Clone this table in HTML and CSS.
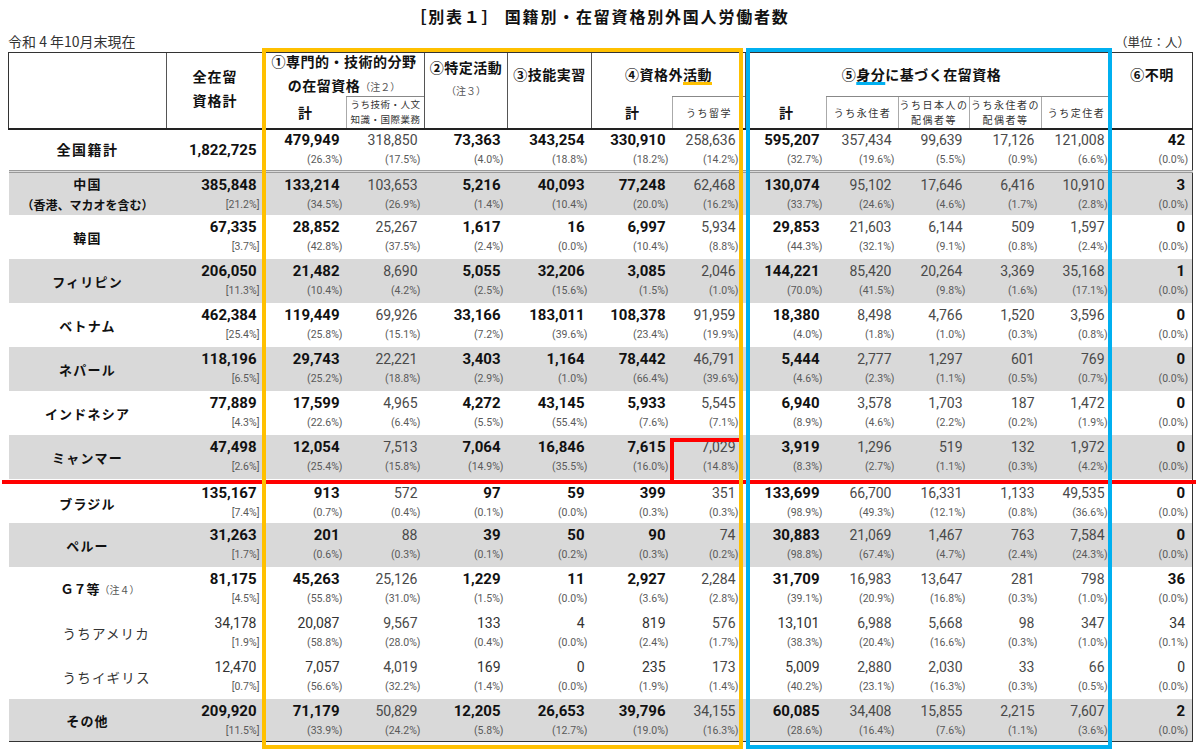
FILE: index.html
```html
<!DOCTYPE html>
<html lang="ja">
<head>
<meta charset="utf-8">
<title>国籍別・在留資格別外国人労働者数</title>
<link rel="stylesheet" href="styles.css">
</head>
<body>
<div class="page">
  <h1 class="title">［別表１］ 国籍別・在留資格別外国人労働者数</h1>
  <div class="meta"><span>令和 4 年10月末現在</span><span class="unit">（単位：人）</span></div>
  <table class="sheet">
    <colgroup>
      <col class="w-name"><col class="w-all"><col class="w-83"><col class="w-78"><col class="w-83"><col class="w-84"><col class="w-81"><col class="w-73"><col class="w-81"><col class="w-72"><col class="w-71"><col class="w-72"><col class="w-70"><col class="w-81">
    </colgroup>
    <thead>
      <tr class="h1">
        <th class="first" rowspan="2"></th>
        <th class="tall" rowspan="2">全在留<br>資格計</th>
        <th class="grp" colspan="2"><div class="lines">①専門的・技術的分野<br>の在留資格<span class="note">（注２）</span></div></th>
        <th class="two" rowspan="2">②特定活動<br><span class="note">（注３）</span></th>
        <th class="top" rowspan="2">③技能実習</th>
        <th class="top" colspan="2">④資格外<span class="u-y">活動</span></th>
        <th class="top shift" colspan="5">⑤<span class="u-b">身分</span>に基づく在留資格</th>
        <th class="top last" rowspan="2">⑥不明</th>
      </tr>
      <tr class="h2">
        <th class="kei">計</th>
        <th class="uchi tiny">うち技術・人文<br>知識・国際業務</th>
        <th class="kei">計</th>
        <th class="uchi">うち留学</th>
        <th class="kei">計</th>
        <th class="uchi">うち永住者</th>
        <th class="uchi">うち日本人の<br>配偶者等</th>
        <th class="uchi">うち永住者の<br>配偶者等</th>
        <th class="uchi">うち定住者</th>
      </tr>
    </thead>
    <tbody>
      <tr class="tot">
        <th class="big">全国籍計</th>
        <td class="m mid"><span class="n">1,822,725</span></td>
        <td class="m"><span class="n">479,949</span><span class="p">(26.3%)</span></td>
        <td><span class="n">318,850</span><span class="p">(17.5%)</span></td>
        <td class="m"><span class="n">73,363</span><span class="p">(4.0%)</span></td>
        <td class="m"><span class="n">343,254</span><span class="p">(18.8%)</span></td>
        <td class="m"><span class="n">330,910</span><span class="p">(18.2%)</span></td>
        <td><span class="n">258,636</span><span class="p">(14.2%)</span></td>
        <td class="m"><span class="n">595,207</span><span class="p">(32.7%)</span></td>
        <td><span class="n">357,434</span><span class="p">(19.6%)</span></td>
        <td><span class="n">99,639</span><span class="p">(5.5%)</span></td>
        <td><span class="n">17,126</span><span class="p">(0.9%)</span></td>
        <td><span class="n">121,008</span><span class="p">(6.6%)</span></td>
        <td class="m"><span class="n">42</span><span class="p">(0.0%)</span></td>
      </tr>
      <tr class="g">
        <th>中国<br><span class="hk">（香港、マカオを含む）</span></th>
        <td class="m"><span class="n">385,848</span><span class="p">[21.2%]</span></td>
        <td class="m"><span class="n">133,214</span><span class="p">(34.5%)</span></td>
        <td><span class="n">103,653</span><span class="p">(26.9%)</span></td>
        <td class="m"><span class="n">5,216</span><span class="p">(1.4%)</span></td>
        <td class="m"><span class="n">40,093</span><span class="p">(10.4%)</span></td>
        <td class="m"><span class="n">77,248</span><span class="p">(20.0%)</span></td>
        <td><span class="n">62,468</span><span class="p">(16.2%)</span></td>
        <td class="m"><span class="n">130,074</span><span class="p">(33.7%)</span></td>
        <td><span class="n">95,102</span><span class="p">(24.6%)</span></td>
        <td><span class="n">17,646</span><span class="p">(4.6%)</span></td>
        <td><span class="n">6,416</span><span class="p">(1.7%)</span></td>
        <td><span class="n">10,910</span><span class="p">(2.8%)</span></td>
        <td class="m"><span class="n">3</span><span class="p">(0.0%)</span></td>
      </tr>
      <tr>
        <th>韓国</th>
        <td class="m"><span class="n">67,335</span><span class="p">[3.7%]</span></td>
        <td class="m"><span class="n">28,852</span><span class="p">(42.8%)</span></td>
        <td><span class="n">25,267</span><span class="p">(37.5%)</span></td>
        <td class="m"><span class="n">1,617</span><span class="p">(2.4%)</span></td>
        <td class="m"><span class="n">16</span><span class="p">(0.0%)</span></td>
        <td class="m"><span class="n">6,997</span><span class="p">(10.4%)</span></td>
        <td><span class="n">5,934</span><span class="p">(8.8%)</span></td>
        <td class="m"><span class="n">29,853</span><span class="p">(44.3%)</span></td>
        <td><span class="n">21,603</span><span class="p">(32.1%)</span></td>
        <td><span class="n">6,144</span><span class="p">(9.1%)</span></td>
        <td><span class="n">509</span><span class="p">(0.8%)</span></td>
        <td><span class="n">1,597</span><span class="p">(2.4%)</span></td>
        <td class="m"><span class="n">0</span><span class="p">(0.0%)</span></td>
      </tr>
      <tr class="g">
        <th>フィリピン</th>
        <td class="m"><span class="n">206,050</span><span class="p">[11.3%]</span></td>
        <td class="m"><span class="n">21,482</span><span class="p">(10.4%)</span></td>
        <td><span class="n">8,690</span><span class="p">(4.2%)</span></td>
        <td class="m"><span class="n">5,055</span><span class="p">(2.5%)</span></td>
        <td class="m"><span class="n">32,206</span><span class="p">(15.6%)</span></td>
        <td class="m"><span class="n">3,085</span><span class="p">(1.5%)</span></td>
        <td><span class="n">2,046</span><span class="p">(1.0%)</span></td>
        <td class="m"><span class="n">144,221</span><span class="p">(70.0%)</span></td>
        <td><span class="n">85,420</span><span class="p">(41.5%)</span></td>
        <td><span class="n">20,264</span><span class="p">(9.8%)</span></td>
        <td><span class="n">3,369</span><span class="p">(1.6%)</span></td>
        <td><span class="n">35,168</span><span class="p">(17.1%)</span></td>
        <td class="m"><span class="n">1</span><span class="p">(0.0%)</span></td>
      </tr>
      <tr>
        <th>ベトナム</th>
        <td class="m"><span class="n">462,384</span><span class="p">[25.4%]</span></td>
        <td class="m"><span class="n">119,449</span><span class="p">(25.8%)</span></td>
        <td><span class="n">69,926</span><span class="p">(15.1%)</span></td>
        <td class="m"><span class="n">33,166</span><span class="p">(7.2%)</span></td>
        <td class="m"><span class="n">183,011</span><span class="p">(39.6%)</span></td>
        <td class="m"><span class="n">108,378</span><span class="p">(23.4%)</span></td>
        <td><span class="n">91,959</span><span class="p">(19.9%)</span></td>
        <td class="m"><span class="n">18,380</span><span class="p">(4.0%)</span></td>
        <td><span class="n">8,498</span><span class="p">(1.8%)</span></td>
        <td><span class="n">4,766</span><span class="p">(1.0%)</span></td>
        <td><span class="n">1,520</span><span class="p">(0.3%)</span></td>
        <td><span class="n">3,596</span><span class="p">(0.8%)</span></td>
        <td class="m"><span class="n">0</span><span class="p">(0.0%)</span></td>
      </tr>
      <tr class="g">
        <th>ネパール</th>
        <td class="m"><span class="n">118,196</span><span class="p">[6.5%]</span></td>
        <td class="m"><span class="n">29,743</span><span class="p">(25.2%)</span></td>
        <td><span class="n">22,221</span><span class="p">(18.8%)</span></td>
        <td class="m"><span class="n">3,403</span><span class="p">(2.9%)</span></td>
        <td class="m"><span class="n">1,164</span><span class="p">(1.0%)</span></td>
        <td class="m"><span class="n">78,442</span><span class="p">(66.4%)</span></td>
        <td><span class="n">46,791</span><span class="p">(39.6%)</span></td>
        <td class="m"><span class="n">5,444</span><span class="p">(4.6%)</span></td>
        <td><span class="n">2,777</span><span class="p">(2.3%)</span></td>
        <td><span class="n">1,297</span><span class="p">(1.1%)</span></td>
        <td><span class="n">601</span><span class="p">(0.5%)</span></td>
        <td><span class="n">769</span><span class="p">(0.7%)</span></td>
        <td class="m"><span class="n">0</span><span class="p">(0.0%)</span></td>
      </tr>
      <tr>
        <th>インドネシア</th>
        <td class="m"><span class="n">77,889</span><span class="p">[4.3%]</span></td>
        <td class="m"><span class="n">17,599</span><span class="p">(22.6%)</span></td>
        <td><span class="n">4,965</span><span class="p">(6.4%)</span></td>
        <td class="m"><span class="n">4,272</span><span class="p">(5.5%)</span></td>
        <td class="m"><span class="n">43,145</span><span class="p">(55.4%)</span></td>
        <td class="m"><span class="n">5,933</span><span class="p">(7.6%)</span></td>
        <td><span class="n">5,545</span><span class="p">(7.1%)</span></td>
        <td class="m"><span class="n">6,940</span><span class="p">(8.9%)</span></td>
        <td><span class="n">3,578</span><span class="p">(4.6%)</span></td>
        <td><span class="n">1,703</span><span class="p">(2.2%)</span></td>
        <td><span class="n">187</span><span class="p">(0.2%)</span></td>
        <td><span class="n">1,472</span><span class="p">(1.9%)</span></td>
        <td class="m"><span class="n">0</span><span class="p">(0.0%)</span></td>
      </tr>
      <tr class="g">
        <th>ミャンマー</th>
        <td class="m"><span class="n">47,498</span><span class="p">[2.6%]</span></td>
        <td class="m"><span class="n">12,054</span><span class="p">(25.4%)</span></td>
        <td><span class="n">7,513</span><span class="p">(15.8%)</span></td>
        <td class="m"><span class="n">7,064</span><span class="p">(14.9%)</span></td>
        <td class="m"><span class="n">16,846</span><span class="p">(35.5%)</span></td>
        <td class="m"><span class="n">7,615</span><span class="p">(16.0%)</span></td>
        <td><span class="n">7,029</span><span class="p">(14.8%)</span></td>
        <td class="m"><span class="n">3,919</span><span class="p">(8.3%)</span></td>
        <td><span class="n">1,296</span><span class="p">(2.7%)</span></td>
        <td><span class="n">519</span><span class="p">(1.1%)</span></td>
        <td><span class="n">132</span><span class="p">(0.3%)</span></td>
        <td><span class="n">1,972</span><span class="p">(4.2%)</span></td>
        <td class="m"><span class="n">0</span><span class="p">(0.0%)</span></td>
      </tr>
      <tr class="below">
        <th>ブラジル</th>
        <td class="m"><span class="n">135,167</span><span class="p">[7.4%]</span></td>
        <td class="m"><span class="n">913</span><span class="p">(0.7%)</span></td>
        <td><span class="n">572</span><span class="p">(0.4%)</span></td>
        <td class="m"><span class="n">97</span><span class="p">(0.1%)</span></td>
        <td class="m"><span class="n">59</span><span class="p">(0.0%)</span></td>
        <td class="m"><span class="n">399</span><span class="p">(0.3%)</span></td>
        <td><span class="n">351</span><span class="p">(0.3%)</span></td>
        <td class="m"><span class="n">133,699</span><span class="p">(98.9%)</span></td>
        <td><span class="n">66,700</span><span class="p">(49.3%)</span></td>
        <td><span class="n">16,331</span><span class="p">(12.1%)</span></td>
        <td><span class="n">1,133</span><span class="p">(0.8%)</span></td>
        <td><span class="n">49,535</span><span class="p">(36.6%)</span></td>
        <td class="m"><span class="n">0</span><span class="p">(0.0%)</span></td>
      </tr>
      <tr class="g">
        <th>ペルー</th>
        <td class="m"><span class="n">31,263</span><span class="p">[1.7%]</span></td>
        <td class="m"><span class="n">201</span><span class="p">(0.6%)</span></td>
        <td><span class="n">88</span><span class="p">(0.3%)</span></td>
        <td class="m"><span class="n">39</span><span class="p">(0.1%)</span></td>
        <td class="m"><span class="n">50</span><span class="p">(0.2%)</span></td>
        <td class="m"><span class="n">90</span><span class="p">(0.3%)</span></td>
        <td><span class="n">74</span><span class="p">(0.2%)</span></td>
        <td class="m"><span class="n">30,883</span><span class="p">(98.8%)</span></td>
        <td><span class="n">21,069</span><span class="p">(67.4%)</span></td>
        <td><span class="n">1,467</span><span class="p">(4.7%)</span></td>
        <td><span class="n">763</span><span class="p">(2.4%)</span></td>
        <td><span class="n">7,584</span><span class="p">(24.3%)</span></td>
        <td class="m"><span class="n">0</span><span class="p">(0.0%)</span></td>
      </tr>
      <tr class="g7">
        <th>Ｇ７等<span class="note">（注４）</span></th>
        <td class="m"><span class="n">81,175</span><span class="p">[4.5%]</span></td>
        <td class="m"><span class="n">45,263</span><span class="p">(55.8%)</span></td>
        <td><span class="n">25,126</span><span class="p">(31.0%)</span></td>
        <td class="m"><span class="n">1,229</span><span class="p">(1.5%)</span></td>
        <td class="m"><span class="n">11</span><span class="p">(0.0%)</span></td>
        <td class="m"><span class="n">2,927</span><span class="p">(3.6%)</span></td>
        <td><span class="n">2,284</span><span class="p">(2.8%)</span></td>
        <td class="m"><span class="n">31,709</span><span class="p">(39.1%)</span></td>
        <td><span class="n">16,983</span><span class="p">(20.9%)</span></td>
        <td><span class="n">13,647</span><span class="p">(16.8%)</span></td>
        <td><span class="n">281</span><span class="p">(0.3%)</span></td>
        <td><span class="n">798</span><span class="p">(1.0%)</span></td>
        <td class="m"><span class="n">36</span><span class="p">(0.0%)</span></td>
      </tr>
      <tr class="sub">
        <th>うちアメリカ</th>
        <td class="m"><span class="n">34,178</span><span class="p">[1.9%]</span></td>
        <td class="m"><span class="n">20,087</span><span class="p">(58.8%)</span></td>
        <td><span class="n">9,567</span><span class="p">(28.0%)</span></td>
        <td class="m"><span class="n">133</span><span class="p">(0.4%)</span></td>
        <td class="m"><span class="n">4</span><span class="p">(0.0%)</span></td>
        <td class="m"><span class="n">819</span><span class="p">(2.4%)</span></td>
        <td><span class="n">576</span><span class="p">(1.7%)</span></td>
        <td class="m"><span class="n">13,101</span><span class="p">(38.3%)</span></td>
        <td><span class="n">6,988</span><span class="p">(20.4%)</span></td>
        <td><span class="n">5,668</span><span class="p">(16.6%)</span></td>
        <td><span class="n">98</span><span class="p">(0.3%)</span></td>
        <td><span class="n">347</span><span class="p">(1.0%)</span></td>
        <td class="m"><span class="n">34</span><span class="p">(0.1%)</span></td>
      </tr>
      <tr class="sub">
        <th>うちイギリス</th>
        <td class="m"><span class="n">12,470</span><span class="p">[0.7%]</span></td>
        <td class="m"><span class="n">7,057</span><span class="p">(56.6%)</span></td>
        <td><span class="n">4,019</span><span class="p">(32.2%)</span></td>
        <td class="m"><span class="n">169</span><span class="p">(1.4%)</span></td>
        <td class="m"><span class="n">0</span><span class="p">(0.0%)</span></td>
        <td class="m"><span class="n">235</span><span class="p">(1.9%)</span></td>
        <td><span class="n">173</span><span class="p">(1.4%)</span></td>
        <td class="m"><span class="n">5,009</span><span class="p">(40.2%)</span></td>
        <td><span class="n">2,880</span><span class="p">(23.1%)</span></td>
        <td><span class="n">2,030</span><span class="p">(16.3%)</span></td>
        <td><span class="n">33</span><span class="p">(0.3%)</span></td>
        <td><span class="n">66</span><span class="p">(0.5%)</span></td>
        <td class="m"><span class="n">0</span><span class="p">(0.0%)</span></td>
      </tr>
      <tr class="g end">
        <th>その他</th>
        <td class="m"><span class="n">209,920</span><span class="p">[11.5%]</span></td>
        <td class="m"><span class="n">71,179</span><span class="p">(33.9%)</span></td>
        <td><span class="n">50,829</span><span class="p">(24.2%)</span></td>
        <td class="m"><span class="n">12,205</span><span class="p">(5.8%)</span></td>
        <td class="m"><span class="n">26,653</span><span class="p">(12.7%)</span></td>
        <td class="m"><span class="n">39,796</span><span class="p">(19.0%)</span></td>
        <td><span class="n">34,155</span><span class="p">(16.3%)</span></td>
        <td class="m"><span class="n">60,085</span><span class="p">(28.6%)</span></td>
        <td><span class="n">34,408</span><span class="p">(16.4%)</span></td>
        <td><span class="n">15,855</span><span class="p">(7.6%)</span></td>
        <td><span class="n">2,215</span><span class="p">(1.1%)</span></td>
        <td><span class="n">7,607</span><span class="p">(3.6%)</span></td>
        <td class="m"><span class="n">2</span><span class="p">(0.0%)</span></td>
      </tr>
    </tbody>
  </table>
  <div class="mark red-line"></div>
  <div class="mark red-box"></div>
  <div class="mark frame yellow"></div>
  <div class="mark frame blue"></div>
</div>
</body>
</html>
```
FILE: styles.css
```css
* { box-sizing: border-box; }
html, body { margin: 0; background: #fff; }
body { font-family: "Noto Sans CJK JP", "Noto Sans", sans-serif; color: #111; }

.page { position: relative; width: 1200px; height: 749px; padding: 0 8px; overflow: hidden; }

.title { margin: 0; padding-top: 5px; height: 27px; line-height: 22px; text-align: center; font-size: 16px; font-weight: 700; letter-spacing: 1.8px; }
.meta { display: flex; justify-content: space-between; align-items: center; margin-top: 5px; height: 18px; font-size: 14px; color: #333; }
.unit { font-size: 12.5px; padding-right: 2px; }

.sheet { border-collapse: collapse; table-layout: fixed; width: 1184px; margin-top: 2px; }
.sheet th, .sheet td { padding: 0; border: 0; }

.w-name { width: 158px; } .w-all { width: 97px; } .w-83 { width: 83px; } .w-78 { width: 78px; }
.w-84 { width: 84px; } .w-81 { width: 81px; } .w-73 { width: 73px; } .w-72 { width: 72px; }
.w-71 { width: 71px; } .w-70 { width: 70px; }

/* header */
.h1 { height: 44px; }
.h2 { height: 32px; }
.h1 th { border-top: 1px solid #333; border-left: 1px solid #555; font-size: 14px; font-weight: 700; letter-spacing: .5px; vertical-align: top; line-height: 22px; text-align: center; }
.h1 th.first { border-left: 1px solid #333; }
.h1 th.last { border-right: 1px solid #333; }
.h1 th.tall { vertical-align: middle; line-height: 24px; padding-bottom: 4px; letter-spacing: 1px; }
.h1 th.grp .lines { margin-top: -4px; height: 38px; line-height: 24px; }
.h1 th.two { padding-top: 3px; }
.h1 th.top { padding-top: 10px; }
.h1 th.shift { padding-right: 14px; }
.note { font-size: 10px; font-weight: 400; color: #555; letter-spacing: 0; }
.u-y { text-decoration: underline; text-decoration-color: #ffc000; text-decoration-thickness: 3px; text-underline-offset: 2px; }
.u-b { text-decoration: underline; text-decoration-color: #00b0f0; text-decoration-thickness: 3px; text-underline-offset: 2px; }

.h2 th { border-left: 1px solid #555; font-size: 14px; font-weight: 700; vertical-align: middle; text-align: center; }
.h2 th.uchi { border-top: 1px solid #888; border-left: 1px solid #aaa; font-size: 10px; font-weight: 400; letter-spacing: 1.5px; line-height: 15px; color: #333; }
.h2 th.uchi.tiny { font-size: 9.5px; letter-spacing: .5px; }

/* body */
tbody tr { height: 44px; }
tbody tr.tot { height: 42px; }
tbody tr.end { height: 40px; }
tbody th { border-left: 1px solid #333; font-size: 13px; font-weight: 700; letter-spacing: 1.2px; text-align: center; vertical-align: middle; line-height: 21px; }
tbody th.big { font-size: 14px; letter-spacing: 1.5px; }
tbody th .hk { font-size: 12px; letter-spacing: 0; }
tbody td { border-left: 1px solid #555; text-align: right; vertical-align: top; padding: 2px 4px 0 0 !important; }
tbody tr.tot td { padding-top: 0 !important; }
tbody tr.below td { padding-top: 4px !important; }
tbody tr.below th { padding-top: 4px; }
tbody td:nth-child(4), tbody td:nth-child(12) { border-left-color: #aaa; }
tbody td:nth-child(8) { padding-right: 7px !important; }
tbody td:last-child { border-right: 1px solid #333; }
tbody td.mid { vertical-align: middle; padding-top: 0 !important; }

tr.g th, tr.g td { background: #d9d9d9; }
tr.tot th, tr.tot td { border-top: 2px solid #222; border-bottom: 3px double #999; }
tr.end th, tr.end td { border-bottom: 1px solid #333; }

tr.g7 th { text-align: left; padding-left: 52px; letter-spacing: 0; }
tr.sub th { text-align: left; padding-left: 54px; font-weight: 400; font-size: 13.5px; letter-spacing: 1.2px; color: #333; }

.n { display: block; font-family: Roboto, "Liberation Sans", sans-serif; font-size: 14px; line-height: 20px; padding-right: 3px; color: #4a4a4a; }
.m .n { font-weight: 700; font-size: 15px; color: #111; }
tr.sub .m .n { font-weight: 400; font-size: 14px; color: #333; }
.p { display: block; font-family: Roboto, "Liberation Sans", sans-serif; font-size: 10.5px; line-height: 20px; color: #5a5a5a; }

/* annotation marks drawn over the table */
.mark { position: absolute; }
.red-line { left: 2px; top: 480px; width: 1194px; height: 4px; background: #f00; }
.red-box { left: 670px; top: 438px; width: 73px; height: 44px; border-top: 4px solid #f00; border-left: 4px solid #f00; }
.frame { top: 48px; height: 701px; border: 4px solid transparent; }
.yellow { left: 262px; width: 481px; border-color: #ffc000; }
.blue { left: 746px; width: 366px; border-color: #00b0f0; }
```
